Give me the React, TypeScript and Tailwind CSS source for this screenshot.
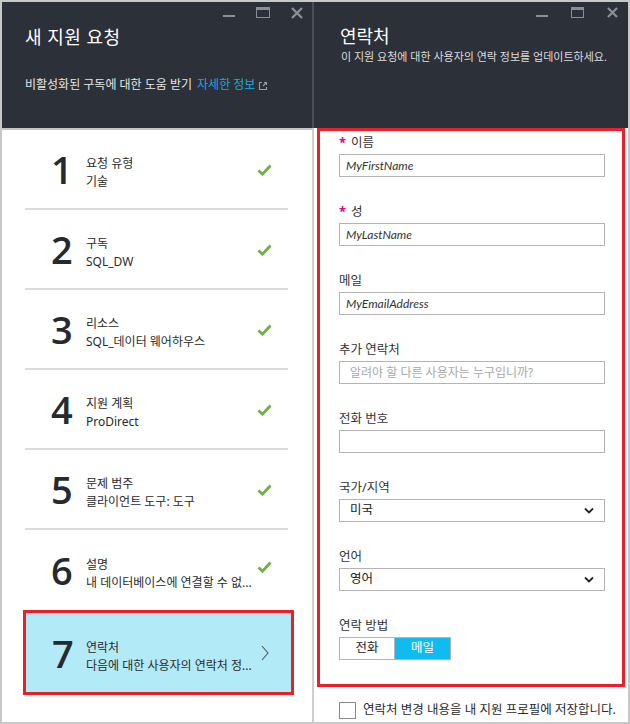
import React from "react";

const F = "font-['Noto_Sans','Noto_Sans_CJK_KR',sans-serif]";

function Check({ up }: { up?: boolean }) {
  return (
    <svg width="15" height="12" viewBox="0 0 15 12" className={up ? "-mt-[6px]" : "mt-[2px]"}>
      <path d="M1.5 6.5 L5.5 10.2 L13.5 1.5" fill="none" stroke="#6cb33f" strokeWidth="2.8" />
    </svg>
  );
}

const steps = [
  { n: "1", t: "요청 유형", s: "기술" },
  { n: "2", t: "구독", s: "SQL_DW" },
  { n: "3", t: "리소스", s: "SQL_데이터 웨어하우스" },
  { n: "4", t: "지원 계획", s: "ProDirect" },
  { n: "5", t: "문제 범주", s: "클라이언트 도구: 도구" },
  { n: "6", t: "설명", s: "내 데이터베이스에 연결할 수 없..." },
];

function Field({ label, req, children }: { label: string; req?: boolean; children: React.ReactNode }) {
  return (
    <div className="flex flex-col">
      <div className="h-[18px] leading-[18px] text-[12.5px] text-[#333] flex items-center">
        {req && <span className="text-[#e5007d] font-bold text-[13px] mr-[5px] -mt-[2px]">*</span>}
        <span>{label}</span>
      </div>
      <div className="mt-[2px]">{children}</div>
    </div>
  );
}

function Input({ value, placeholder }: { value?: string; placeholder?: string }) {
  return (
    <div className="w-[266px] h-[23px] border border-[#b4b4b4] flex items-center px-[6px]">
      {value ? (
        <span className="font-['Lato',sans-serif] italic text-[12px] text-[#333]">{value}</span>
      ) : placeholder ? (
        <span className="text-[12px] text-[#a8a8a8] pl-[4px]">{placeholder}</span>
      ) : null}
    </div>
  );
}

function Select({ value }: { value: string }) {
  return (
    <div className="w-[266px] h-[23px] border border-[#b4b4b4] flex items-center justify-between pl-[10px] pr-[10px]">
      <span className="text-[12.5px] text-[#222]">{value}</span>
      <svg width="10" height="7" viewBox="0 0 10 7">
        <path d="M1 1.5 L5 5.5 L9 1.5" fill="none" stroke="#222" strokeWidth="1.8" />
      </svg>
    </div>
  );
}

export default function App() {
  return (
    <div className={`${F} w-[630px] h-[724px] border-2 border-[#c8c8c8] flex bg-white`}>
      {/* Left panel */}
      <div className="w-[310px] flex flex-col">
        <div className="h-[126px] bg-[#2c3038] pr-[9px] flex flex-col">
          <div className="flex items-start justify-end gap-[21px] h-[12px]">
            <div className="w-[12px] h-[2px] bg-[#8b8e93] mt-[13px]" />
            <div className="w-[14px] h-[11px] border-[1.5px] border-t-[3px] border-[#8b8e93] mt-[5px]" />
            <svg width="12" height="12" viewBox="0 0 12 12" className="mt-[5px]">
              <path d="M1 1 L11 11 M11 1 L1 11" stroke="#8b8e93" strokeWidth="2.4" />
            </svg>
          </div>
          <div className="pl-[23px] mt-[10px] text-[18px] leading-[26px] text-white tracking-[0.5px]">새 지원 요청</div>
          <div className="pl-[23px] mt-[27px] text-[12px] leading-[16px] text-[#e6e6e6] flex items-center">
            <span>비활성화된 구독에 대한 도움 받기</span>
            <span className="text-[#1ea9df] ml-[5px]">자세한 정보</span>
            <svg width="10" height="10" viewBox="0 0 10 10" className="ml-[3px] mt-[2px]">
              <path d="M4 1.5 H1.5 V8.5 H8.5 V6 M5 5 L8.5 1.5 M6 1.5 H8.5 V4" fill="none" stroke="#9a9da2" strokeWidth="1.1" />
            </svg>
          </div>
        </div>
        <div className="h-[2px] bg-[#c6c6c6]" />
        <div className="flex flex-col">
          {steps.map((st, i) => (
            <div
              key={st.n}
              className={`ml-[23px] w-[263px] h-[80px] flex items-center pl-[26px] pr-[16px] ${i < 5 ? "border-b-2 border-[#dcdcdc]" : ""}`}
            >
              <div className="w-[35px] text-[38px] leading-[40px] font-semibold text-[#252a31] font-['Open_Sans',sans-serif]">{st.n}</div>
              <div className="flex-1 flex flex-col pt-[8px]">
                <div className="text-[12px] leading-[18px] text-[#2a2a2a]">{st.t}</div>
                <div className="text-[12px] leading-[18px] text-[#2a2a2a] whitespace-nowrap">{st.s}</div>
              </div>
              <Check up={i === 5} />
            </div>
          ))}
          <div className="ml-[21px] w-[271px] h-[85px] border-[3px] border-[#e8202a] bg-[#b3eaf8] flex items-center pl-[26px] pr-[22px]">
            <div className="w-[34px] text-[38px] leading-[40px] font-semibold text-[#252a31] font-['Open_Sans',sans-serif]">7</div>
            <div className="flex-1 flex flex-col pt-[8px]">
              <div className="text-[12px] leading-[18px] text-[#2a2a2a]">연락처</div>
              <div className="text-[12px] leading-[18px] text-[#2a2a2a] whitespace-nowrap">다음에 대한 사용자의 연락처 정...</div>
            </div>
            <svg width="8" height="16" viewBox="0 0 8 16">
              <path d="M1 1 L7 8 L1 15" fill="none" stroke="#555" strokeWidth="1.1" />
            </svg>
          </div>
        </div>
      </div>
      {/* Divider */}
      <div className="w-[2px] flex flex-col">
        <div className="h-[126px] bg-[#4a4e56]" />
        <div className="flex-1 bg-[#cfcfcf]" />
      </div>
      {/* Right panel */}
      <div className="flex-1 flex flex-col">
        <div className="h-[126px] bg-[#2c3038] pr-[10px] flex flex-col">
          <div className="flex items-start justify-end gap-[23px] h-[12px]">
            <div className="w-[12px] h-[2px] bg-[#8b8e93] mt-[13px]" />
            <div className="w-[13px] h-[11px] border-[1.5px] border-t-[3px] border-[#8b8e93] mt-[5px]" />
            <svg width="11" height="11" viewBox="0 0 12 12" className="mt-[5px]">
              <path d="M1 1 L11 11 M11 1 L1 11" stroke="#8b8e93" strokeWidth="2.4" />
            </svg>
          </div>
          <div className="pl-[26px] mt-[9px] text-[18px] leading-[26px] text-white">연락처</div>
          <div className="pl-[27px] mt-[0px] text-[11px] leading-[16px] text-[#dcdcdc] whitespace-nowrap">이 지원 요청에 대한 사용자의 연락 정보를 업데이트하세요.</div>
        </div>
        <div className="mx-[3px] border-[3px] border-[#e8202a] pt-[3px] pb-[24px] pl-[19px] flex flex-col gap-[26px]">
          <Field label="이름" req><Input value="MyFirstName" /></Field>
          <Field label="성" req><Input value="MyLastName" /></Field>
          <Field label="메일"><Input value="MyEmailAddress" /></Field>
          <Field label="추가 연락처"><Input placeholder="알려야 할 다른 사용자는 누구입니까?" /></Field>
          <Field label="전화 번호"><Input /></Field>
          <Field label="국가/지역"><Select value="미국" /></Field>
          <Field label="언어"><Select value="영어" /></Field>
          <Field label="연락 방법">
            <div className="flex h-[23px] w-[112px] border border-[#b4b4b4]">
              <div className="w-[55px] flex items-center justify-center text-[12.5px] text-[#222] border-r border-[#b4b4b4]">전화</div>
              <div className="flex-1 flex items-center justify-center text-[12.5px] text-white bg-[#10bcef]">메일</div>
            </div>
          </Field>
        </div>
        <div className="mt-[14px] pl-[25px] flex items-center">
          <div className="w-[17px] h-[17px] border border-[#8a8a8a] bg-white" />
          <span className="ml-[7px] text-[12.5px] text-[#2a2a2a] whitespace-nowrap">연락처 변경 내용을 내 지원 프로필에 저장합니다.</span>
        </div>
      </div>
    </div>
  );
}
